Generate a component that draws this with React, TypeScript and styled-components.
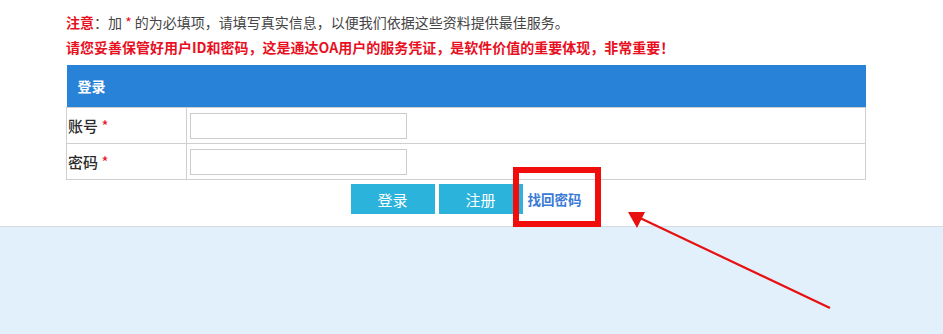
import React from "react";
import styled, { createGlobalStyle } from "styled-components";

const GlobalStyle = createGlobalStyle`
  html, body {
    margin: 0;
    padding: 0;
    background: #fff;
  }
  body {
    font-family: "Noto Sans CJK SC", "Microsoft YaHei", sans-serif;
    font-size: 14px;
    color: #333;
  }
`;

const Page = styled.div`
  position: relative;
  width: 943px;
  height: 334px;
  overflow: hidden;
`;

const Main = styled.div`
  padding: 10px 0 0 66px;
  height: 227px;
  box-sizing: border-box;
  border-bottom: 1px solid #d4dde4;
`;

const Notice = styled.p<{ $strong?: boolean }>`
  margin: 0;
  height: 25px;
  line-height: 25px;
  font-size: 14px;
  color: ${(p) => (p.$strong ? "#e8101f" : "#444")};
  font-weight: ${(p) => (p.$strong ? 700 : 400)};
`;

const Red = styled.span<{ $bold?: boolean }>`
  color: #e8101f;
  font-weight: ${(p) => (p.$bold ? 700 : 400)};
`;

const FormTable = styled.table`
  margin-top: 5px;
  width: 800px;
  border-collapse: collapse;
`;

const HeadCell = styled.th`
  height: 42px;
  padding: 0 0 0 11px;
  background: #2883d8;
  color: #fff;
  font-size: 14px;
  font-weight: 700;
  text-align: left;
`;

const LabelCell = styled.td`
  width: 118px;
  height: 35px;
  padding: 0 0 0 1px;
  border: 1px solid #cfcfcf;
  font-size: 15px;
  font-weight: 500;
  color: #2a2a2a;
`;

const FieldCell = styled.td`
  padding: 0 0 0 3px;
  border: 1px solid #cfcfcf;
`;

const Input = styled.input`
  display: block;
  width: 217px;
  height: 26px;
  box-sizing: border-box;
  border: 1px solid #cccccc;
  outline: none;
  padding: 0 4px;
`;

const Actions = styled.div`
  width: 800px;
  display: flex;
  justify-content: center;
  align-items: center;
  gap: 4px;
  margin-top: 4px;
`;

const Button = styled.button`
  width: 84px;
  height: 30px;
  border: none;
  background: #2bb3dc;
  color: #fff;
  font-family: inherit;
  font-size: 15px;
  padding: 0;
`;

const Link = styled.a`
  margin-left: 1px;
  color: #3a7ad6;
  font-size: 13.5px;
  font-weight: 700;
  text-decoration: none;
`;

const Footer = styled.div`
  height: 107px;
  background: #e1f0fb;
`;

const Highlight = styled.div`
  position: absolute;
  left: 513px;
  top: 167px;
  width: 88px;
  height: 60px;
  box-sizing: border-box;
  border: 6px solid #f20d0d;
  pointer-events: none;
`;

const Arrow = styled.svg`
  position: absolute;
  left: 0;
  top: 0;
  pointer-events: none;
`;

export default function App() {
  return (
    <Page>
      <GlobalStyle />
      <Main>
        <Notice>
          <Red $bold>注意</Red>：加 <Red>*</Red> 的为必填项，请填写真实信息，以便我们依据这些资料提供最佳服务。
        </Notice>
        <Notice $strong>
          请您妥善保管好用户ID和密码，这是通达OA用户的服务凭证，是软件价值的重要体现，非常重要！
        </Notice>
        <FormTable>
          <thead>
            <tr>
              <HeadCell colSpan={2}>登录</HeadCell>
            </tr>
          </thead>
          <tbody>
            <tr>
              <LabelCell>
                账号 <Red>*</Red>
              </LabelCell>
              <FieldCell>
                <Input type="text" />
              </FieldCell>
            </tr>
            <tr>
              <LabelCell>
                密码 <Red>*</Red>
              </LabelCell>
              <FieldCell>
                <Input type="password" />
              </FieldCell>
            </tr>
          </tbody>
        </FormTable>
        <Actions>
          <Button>登录</Button>
          <Button>注册</Button>
          <Link href="#">找回密码</Link>
        </Actions>
      </Main>
      <Footer />
      <Highlight />
      <Arrow width="943" height="334" viewBox="0 0 943 334">
        <line x1="830" y1="308" x2="640" y2="218" stroke="#e81010" strokeWidth="2.2" />
        <polygon points="628,212 645,212 637,228" fill="#e81010" />
      </Arrow>
    </Page>
  );
}
